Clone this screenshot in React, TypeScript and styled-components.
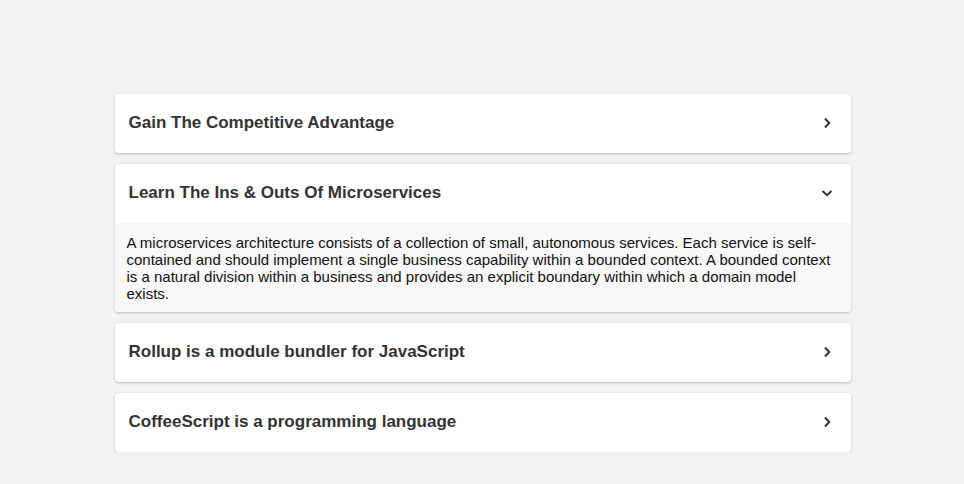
import React, { useState } from "react";
import styled, { createGlobalStyle } from "styled-components";

const GlobalStyle = createGlobalStyle`
  html, body { margin: 0; padding: 0; background: #f2f2f2; }
  body { font-family: "Liberation Sans", Arial, sans-serif; }
`;

const Page = styled.div`
  padding-top: 94px;
  display: flex;
  justify-content: center;
`;

const List = styled.div`
  width: 736px;
  margin-left: 1px;
  display: flex;
  flex-direction: column;
  gap: 11px;
`;

const Card = styled.div`
  background: #ffffff;
  border-radius: 4px;
  box-shadow: 0 1px 3px rgba(0, 0, 0, 0.22);
  overflow: hidden;
`;

const Header = styled.button`
  all: unset;
  box-sizing: border-box;
  width: 100%;
  height: 59px;
  padding: 0 18px 2px 14px;
  display: flex;
  align-items: center;
  justify-content: space-between;
  cursor: pointer;
  font-family: "Liberation Sans", Arial, sans-serif;
  font-weight: 700;
  font-size: 17px;
  color: #333333;
`;

const Body = styled.div`
  background: #f8f8f8;
  padding: 11px 16px 10px 12px;
  font-size: 15px;
  line-height: 17px;
  color: #111111;
`;

const Chevron = ({ open }: { open: boolean }) => (
  <svg width="12" height="12" viewBox="0 0 12 12" style={{ transform: open ? "rotate(90deg)" : "none" }}>
    <path d="M4 1.5 L8.2 6 L4 10.5" fill="none" stroke="#333" strokeWidth="2" />
  </svg>
);

const items = [
  { title: "Gain The Competitive Advantage", body: "" },
  {
    title: "Learn The Ins & Outs Of Microservices",
    body:
      "A microservices architecture consists of a collection of small, autonomous services. Each service is self-contained and should implement a single business capability within a bounded context. A bounded context is a natural division within a business and provides an explicit boundary within which a domain model exists.",
  },
  { title: "Rollup is a module bundler for JavaScript", body: "" },
  { title: "CoffeeScript is a programming language", body: "" },
];

export default function App() {
  const [open, setOpen] = useState<number>(1);
  return (
    <>
      <GlobalStyle />
      <Page>
        <List>
          {items.map((it, i) => (
            <Card key={i}>
              <Header onClick={() => setOpen(open === i ? -1 : i)}>
                <span>{it.title}</span>
                <Chevron open={open === i} />
              </Header>
              {open === i && <Body>{it.body}</Body>}
            </Card>
          ))}
        </List>
      </Page>
    </>
  );
}
